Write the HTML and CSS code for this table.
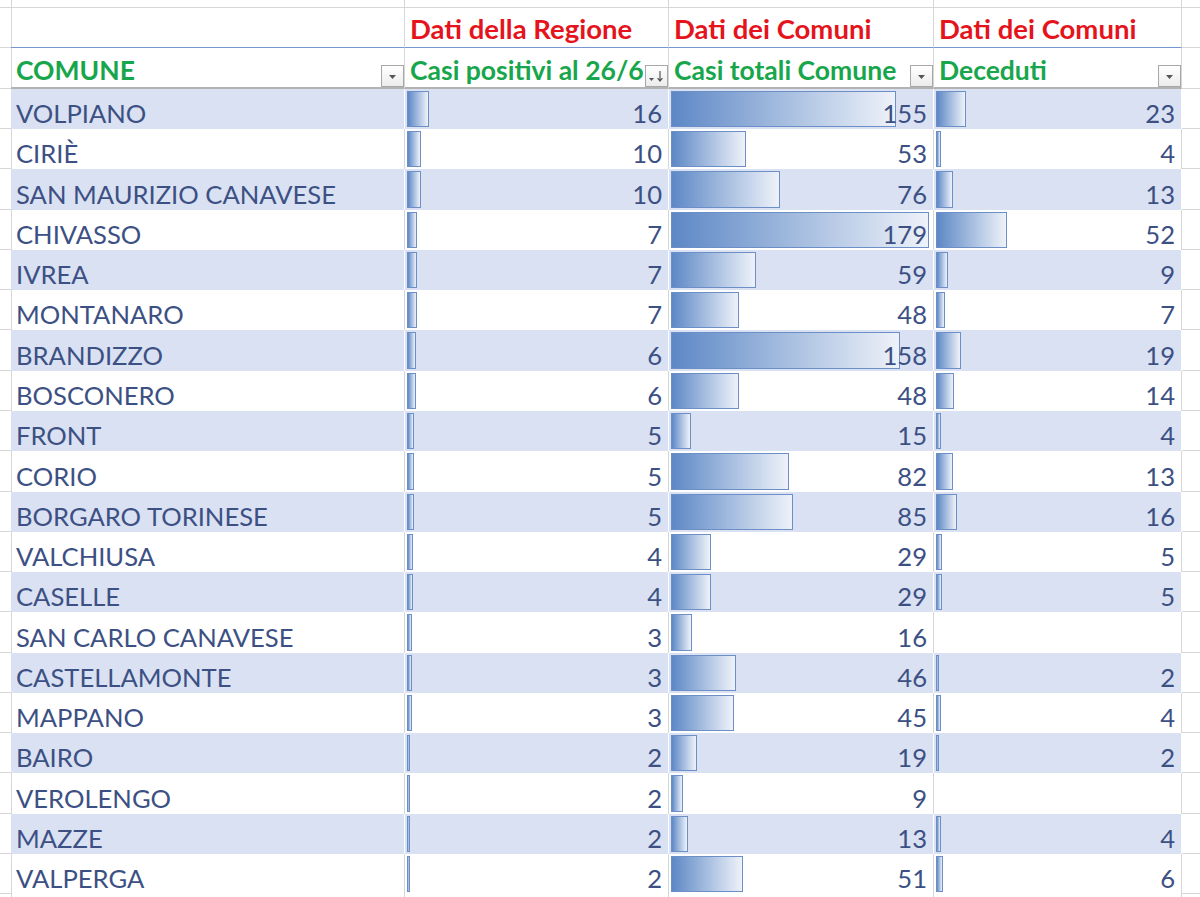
FILE: index.html
```html
<!DOCTYPE html>
<html lang="it">
<head>
<meta charset="utf-8">
<title>Comuni</title>
<link rel="stylesheet" href="styles.css">
</head>
<body>
<div class="sheet">
  <div class="row top">
    <div class="cell c0"></div><div class="cell"></div><div class="cell"></div><div class="cell"></div><div class="cell"></div><div class="cell ce"></div>
  </div>
  <div class="row group">
    <div class="cell c0"></div>
    <div class="cell"></div>
    <div class="cell red">Dati della Regione</div>
    <div class="cell red">Dati dei Comuni</div>
    <div class="cell red">Dati dei Comuni</div>
    <div class="cell ce"></div>
  </div>
  <div class="row head">
    <div class="cell c0"></div>
    <div class="cell green">COMUNE<span class="flt"><svg viewBox="0 0 21 20" width="21" height="20"><path d="M7 9h7l-3.5 4z" fill="#555"/></svg></span></div>
    <div class="cell green">Casi positivi al 26/6<span class="flt"><svg viewBox="0 0 21 20" width="21" height="20"><path d="M3 12h5l-2.5 3z" fill="#555"/><path d="M14 5v10M11.6 12.2l2.4 2.8 2.4-2.8" stroke="#555" stroke-width="1.2" fill="none"/></svg></span></div>
    <div class="cell green">Casi totali Comune<span class="flt"><svg viewBox="0 0 21 20" width="21" height="20"><path d="M7 9h7l-3.5 4z" fill="#555"/></svg></span></div>
    <div class="cell green">Deceduti<span class="flt"><svg viewBox="0 0 21 20" width="21" height="20"><path d="M7 9h7l-3.5 4z" fill="#555"/></svg></span></div>
    <div class="cell ce"></div>
  </div>

  <div class="row data band"><div class="cell c0"></div><div class="cell name">VOLPIANO</div><div class="cell num"><i class="bar" style="width:22px"></i><span>16</span></div><div class="cell num"><i class="bar" style="width:225px"></i><span>155</span></div><div class="cell num"><i class="bar" style="width:30px"></i><span>23</span></div><div class="cell ce"></div></div>
  <div class="row data"><div class="cell c0"></div><div class="cell name">CIRIÈ</div><div class="cell num"><i class="bar" style="width:14px"></i><span>10</span></div><div class="cell num"><i class="bar" style="width:75px"></i><span>53</span></div><div class="cell num"><i class="bar" style="width:5px"></i><span>4</span></div><div class="cell ce"></div></div>
  <div class="row data band"><div class="cell c0"></div><div class="cell name">SAN MAURIZIO CANAVESE</div><div class="cell num"><i class="bar" style="width:14px"></i><span>10</span></div><div class="cell num"><i class="bar" style="width:109px"></i><span>76</span></div><div class="cell num"><i class="bar" style="width:17px"></i><span>13</span></div><div class="cell ce"></div></div>
  <div class="row data"><div class="cell c0"></div><div class="cell name">CHIVASSO</div><div class="cell num"><i class="bar" style="width:10px"></i><span>7</span></div><div class="cell num"><i class="bar" style="width:258px"></i><span>179</span></div><div class="cell num"><i class="bar" style="width:71px"></i><span>52</span></div><div class="cell ce"></div></div>
  <div class="row data band"><div class="cell c0"></div><div class="cell name">IVREA</div><div class="cell num"><i class="bar" style="width:10px"></i><span>7</span></div><div class="cell num"><i class="bar" style="width:85px"></i><span>59</span></div><div class="cell num"><i class="bar" style="width:12px"></i><span>9</span></div><div class="cell ce"></div></div>
  <div class="row data"><div class="cell c0"></div><div class="cell name">MONTANARO</div><div class="cell num"><i class="bar" style="width:10px"></i><span>7</span></div><div class="cell num"><i class="bar" style="width:68px"></i><span>48</span></div><div class="cell num"><i class="bar" style="width:9px"></i><span>7</span></div><div class="cell ce"></div></div>
  <div class="row data band"><div class="cell c0"></div><div class="cell name">BRANDIZZO</div><div class="cell num"><i class="bar" style="width:9px"></i><span>6</span></div><div class="cell num"><i class="bar" style="width:229px"></i><span>158</span></div><div class="cell num"><i class="bar" style="width:25px"></i><span>19</span></div><div class="cell ce"></div></div>
  <div class="row data"><div class="cell c0"></div><div class="cell name">BOSCONERO</div><div class="cell num"><i class="bar" style="width:9px"></i><span>6</span></div><div class="cell num"><i class="bar" style="width:68px"></i><span>48</span></div><div class="cell num"><i class="bar" style="width:18px"></i><span>14</span></div><div class="cell ce"></div></div>
  <div class="row data band"><div class="cell c0"></div><div class="cell name">FRONT</div><div class="cell num"><i class="bar" style="width:7px"></i><span>5</span></div><div class="cell num"><i class="bar" style="width:20px"></i><span>15</span></div><div class="cell num"><i class="bar" style="width:5px"></i><span>4</span></div><div class="cell ce"></div></div>
  <div class="row data"><div class="cell c0"></div><div class="cell name">CORIO</div><div class="cell num"><i class="bar" style="width:7px"></i><span>5</span></div><div class="cell num"><i class="bar" style="width:118px"></i><span>82</span></div><div class="cell num"><i class="bar" style="width:17px"></i><span>13</span></div><div class="cell ce"></div></div>
  <div class="row data band"><div class="cell c0"></div><div class="cell name">BORGARO TORINESE</div><div class="cell num"><i class="bar" style="width:7px"></i><span>5</span></div><div class="cell num"><i class="bar" style="width:122px"></i><span>85</span></div><div class="cell num"><i class="bar" style="width:21px"></i><span>16</span></div><div class="cell ce"></div></div>
  <div class="row data"><div class="cell c0"></div><div class="cell name">VALCHIUSA</div><div class="cell num"><i class="bar" style="width:6px"></i><span>4</span></div><div class="cell num"><i class="bar" style="width:40px"></i><span>29</span></div><div class="cell num"><i class="bar" style="width:6px"></i><span>5</span></div><div class="cell ce"></div></div>
  <div class="row data band"><div class="cell c0"></div><div class="cell name">CASELLE</div><div class="cell num"><i class="bar" style="width:6px"></i><span>4</span></div><div class="cell num"><i class="bar" style="width:40px"></i><span>29</span></div><div class="cell num"><i class="bar" style="width:6px"></i><span>5</span></div><div class="cell ce"></div></div>
  <div class="row data"><div class="cell c0"></div><div class="cell name">SAN CARLO CANAVESE</div><div class="cell num"><i class="bar" style="width:5px"></i><span>3</span></div><div class="cell num"><i class="bar" style="width:21px"></i><span>16</span></div><div class="cell num"></div><div class="cell ce"></div></div>
  <div class="row data band"><div class="cell c0"></div><div class="cell name">CASTELLAMONTE</div><div class="cell num"><i class="bar" style="width:5px"></i><span>3</span></div><div class="cell num"><i class="bar" style="width:65px"></i><span>46</span></div><div class="cell num"><i class="bar" style="width:3px"></i><span>2</span></div><div class="cell ce"></div></div>
  <div class="row data"><div class="cell c0"></div><div class="cell name">MAPPANO</div><div class="cell num"><i class="bar" style="width:5px"></i><span>3</span></div><div class="cell num"><i class="bar" style="width:63px"></i><span>45</span></div><div class="cell num"><i class="bar" style="width:5px"></i><span>4</span></div><div class="cell ce"></div></div>
  <div class="row data band"><div class="cell c0"></div><div class="cell name">BAIRO</div><div class="cell num"><i class="bar" style="width:3px"></i><span>2</span></div><div class="cell num"><i class="bar" style="width:26px"></i><span>19</span></div><div class="cell num"><i class="bar" style="width:3px"></i><span>2</span></div><div class="cell ce"></div></div>
  <div class="row data"><div class="cell c0"></div><div class="cell name">VEROLENGO</div><div class="cell num"><i class="bar" style="width:3px"></i><span>2</span></div><div class="cell num"><i class="bar" style="width:12px"></i><span>9</span></div><div class="cell num"></div><div class="cell ce"></div></div>
  <div class="row data band"><div class="cell c0"></div><div class="cell name">MAZZE</div><div class="cell num"><i class="bar" style="width:3px"></i><span>2</span></div><div class="cell num"><i class="bar" style="width:17px"></i><span>13</span></div><div class="cell num"><i class="bar" style="width:5px"></i><span>4</span></div><div class="cell ce"></div></div>
  <div class="row data"><div class="cell c0"></div><div class="cell name">VALPERGA</div><div class="cell num"><i class="bar" style="width:3px"></i><span>2</span></div><div class="cell num"><i class="bar" style="width:72px"></i><span>51</span></div><div class="cell num"><i class="bar" style="width:7px"></i><span>6</span></div><div class="cell ce"></div></div>
  <div class="row tail">
    <div class="cell c0"></div><div class="cell"></div><div class="cell"></div><div class="cell"></div><div class="cell"></div><div class="cell ce"></div>
  </div>
</div>
</body>
</html>
```
FILE: styles.css
```css
html, body {
  margin: 0;
  padding: 0;
  background: #ffffff;
  overflow: hidden;
}
body {
  font-family: Lato, "Open Sans", sans-serif;
  font-size: 25.6px;
  color: #3c5084;
}
.sheet {
  display: flex;
  flex-direction: column;
  width: 1200px;
}
.row {
  display: grid;
  grid-template-columns: 11px 394px 264px 265px 248px 18px;
  height: 40.28px;
  flex: none;
}
.row.top { height: 8px; }
.row.head { height: 40.6px; }
.cell {
  box-sizing: border-box;
  position: relative;
  border-right: 1px solid #d6d6d6;
  border-bottom: 1px solid #d6d6d6;
  display: flex;
  align-items: flex-end;
  padding: 0 6px 1px 5px;
  white-space: nowrap;
  overflow: visible;
}
.cell.ce { border-right: none; }
.red {
  color: #e5141c;
  font-weight: 700;
  font-size: 27.5px;
  padding-bottom: 2px;
}
.green {
  color: #17a64b;
  font-weight: 700;
  font-size: 26.5px;
  padding-left: 5px;
  padding-bottom: 1px;
}
.group .cell:nth-child(n+2):nth-child(-n+5) { border-bottom: 1px solid #7596cf; }
.head .cell:nth-child(n+2):nth-child(-n+5) { border-bottom: 2px solid #b3b3b3; }
.flt {
  position: absolute;
  right: 0;
  bottom: 0;
  width: 21px;
  height: 20px;
  border: 1px solid #a8a8a8;
  background: linear-gradient(#ffffff, #ececec);
  display: block;
}
.flt svg { display: block; }
.data .cell:nth-child(n+2):nth-child(-n+5) { border-bottom: none; }
.data.band .cell:nth-child(n+2):nth-child(-n+5) {
  background: #d9e1f2;
  border-right-color: #ffffff;
}
.data.band .cell:nth-child(5) { border-right-color: #d6d6d6; }
.num { justify-content: flex-end; }
.num span { position: relative; z-index: 1; }
.bar {
  position: absolute;
  left: 2px;
  top: 2px;
  bottom: 2px;
  box-sizing: border-box;
  border: 1px solid #6b8fc6;
  background: linear-gradient(to right, #5d88c6, #eef2f9);
}
```
